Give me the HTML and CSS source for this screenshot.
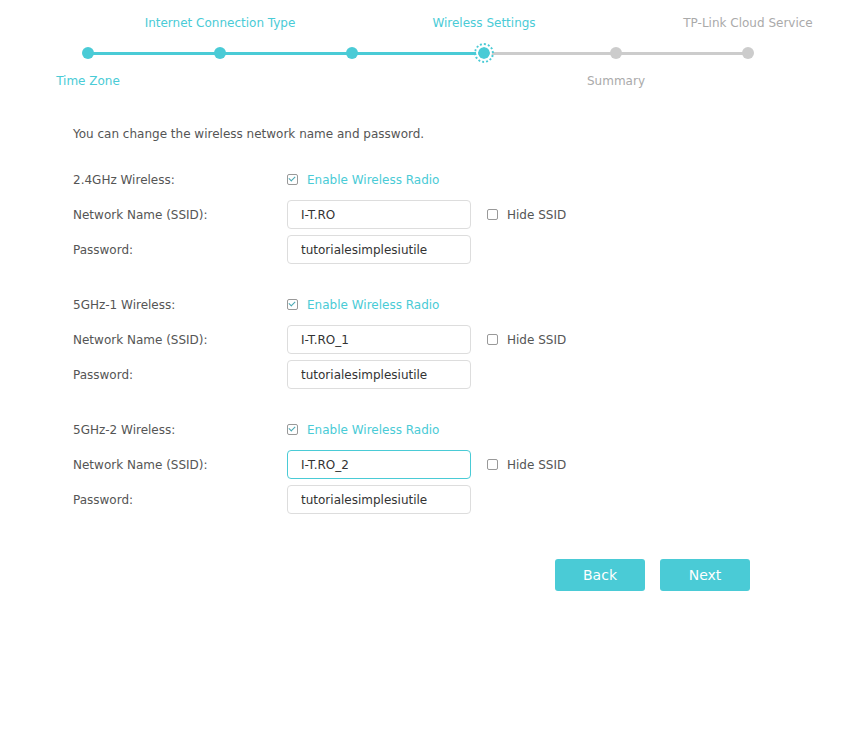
FILE: index.html
```html
<!DOCTYPE html>
<html lang="en">
<head>
    <meta charset="UTF-8">
    <title>Quick Setup - Wireless Settings</title>
    <link rel="stylesheet" href="styles.css">
</head>
<body>
    <div class="stepper">
        <div class="step done">
            <div class="step-top"></div>
            <div class="step-dot"><span class="dot"></span></div>
            <div class="step-bottom">Time Zone</div>
        </div>
        <div class="step done">
            <div class="step-top">Internet Connection Type</div>
            <div class="step-dot"><span class="dot"></span></div>
            <div class="step-bottom"></div>
        </div>
        <div class="step done">
            <div class="step-top"></div>
            <div class="step-dot"><span class="dot"></span></div>
            <div class="step-bottom"></div>
        </div>
        <div class="step current">
            <div class="step-top">Wireless Settings</div>
            <div class="step-dot"><span class="dot"></span></div>
            <div class="step-bottom"></div>
        </div>
        <div class="step">
            <div class="step-top"></div>
            <div class="step-dot"><span class="dot"></span></div>
            <div class="step-bottom">Summary</div>
        </div>
        <div class="step last">
            <div class="step-top">TP-Link Cloud Service</div>
            <div class="step-dot"><span class="dot"></span></div>
            <div class="step-bottom"></div>
        </div>
    </div>

    <div class="content">
        <p class="intro">You can change the wireless network name and password.</p>

        <div class="group">
            <div class="row">
                <div class="label">2.4GHz Wireless:</div>
                <label class="check checked"><span class="box"></span>Enable Wireless Radio</label>
            </div>
            <div class="row">
                <div class="label">Network Name (SSID):</div>
                <input class="text" type="text" value="I-T.RO">
                <label class="check hide"><span class="box"></span>Hide SSID</label>
            </div>
            <div class="row">
                <div class="label">Password:</div>
                <input class="text" type="text" value="tutorialesimplesiutile">
            </div>
        </div>

        <div class="group">
            <div class="row">
                <div class="label">5GHz-1 Wireless:</div>
                <label class="check checked"><span class="box"></span>Enable Wireless Radio</label>
            </div>
            <div class="row">
                <div class="label">Network Name (SSID):</div>
                <input class="text" type="text" value="I-T.RO_1">
                <label class="check hide"><span class="box"></span>Hide SSID</label>
            </div>
            <div class="row">
                <div class="label">Password:</div>
                <input class="text" type="text" value="tutorialesimplesiutile">
            </div>
        </div>

        <div class="group">
            <div class="row">
                <div class="label">5GHz-2 Wireless:</div>
                <label class="check checked"><span class="box"></span>Enable Wireless Radio</label>
            </div>
            <div class="row">
                <div class="label">Network Name (SSID):</div>
                <input class="text focused" type="text" value="I-T.RO_2">
                <label class="check hide"><span class="box"></span>Hide SSID</label>
            </div>
            <div class="row">
                <div class="label">Password:</div>
                <input class="text" type="text" value="tutorialesimplesiutile">
            </div>
        </div>

        <div class="actions">
            <button class="btn">Back</button>
            <button class="btn">Next</button>
        </div>
    </div>
</body>
</html>
```

FILE: styles.css
```css
body {
    margin: 0;
    font-family: 'DejaVu Sans', Verdana, sans-serif;
    font-size: 12px;
    color: #555;
    background: #fff;
}
.stepper {
    display: flex;
    padding-left: 22px;
}
.step {
    width: 132px;
    display: flex;
    flex-direction: column;
    align-items: center;
}
.step-top,
.step-bottom {
    height: 18px;
    line-height: 18px;
    white-space: nowrap;
    color: #aaa;
}
.step-top {
    margin-top: 14px;
}
.step-bottom {
    margin-top: 9px;
}
.step.done .step-top,
.step.done .step-bottom,
.step.current .step-top {
    color: #4acbd6;
}
.step-dot {
    position: relative;
    width: 100%;
    height: 20px;
    margin-top: 11px;
    display: flex;
    align-items: center;
    justify-content: center;
}
.step-dot::after {
    content: "";
    position: absolute;
    left: 50%;
    width: 100%;
    top: 9px;
    height: 3px;
    background: #ccc;
}
.step.done .step-dot::after {
    background: #4acbd6;
}
.step.last .step-dot::after {
    display: none;
}
.dot {
    position: relative;
    z-index: 1;
    width: 12px;
    height: 12px;
    border-radius: 50%;
    background: #ccc;
}
.step.done .dot {
    background: #4acbd6;
}
.step.current .dot {
    padding: 2px;
    border: 2px dotted #4acbd6;
    box-sizing: content-box;
    background-color: #4acbd6;
    background-clip: content-box;
    box-shadow: inset 0 0 0 2px #fff;
}
.content {
    padding-left: 73px;
    width: 677px;
}
.intro {
    margin: 34px 0 18px;
    line-height: 20px;
}
.group {
    margin-bottom: 20px;
}
.row {
    display: flex;
    align-items: center;
    height: 35px;
}
.label {
    width: 214px;
}
.text {
    width: 184px;
    height: 29px;
    box-sizing: border-box;
    border: 1px solid #ddd;
    border-radius: 4px;
    padding: 0 13px;
    font-family: 'DejaVu Sans', Verdana, sans-serif;
    font-size: 12px;
    color: #333;
    outline: none;
}
.text.focused {
    border-color: #4acbd6;
}
.check {
    display: flex;
    align-items: center;
    color: #4acbd6;
}
.check.hide {
    margin-left: 16px;
    color: #555;
}
.box {
    width: 9px;
    height: 9px;
    border: 1px solid #999;
    border-radius: 2px;
    margin-right: 9px;
    position: relative;
}
.check.checked .box::after {
    content: "";
    position: absolute;
    left: 2px;
    top: 0;
    width: 3px;
    height: 5px;
    border: solid #4aa8b4;
    border-width: 0 1.5px 1.5px 0;
    transform: rotate(45deg);
}
.actions {
    display: flex;
    justify-content: flex-end;
    gap: 15px;
    margin-top: 42px;
}
.btn {
    width: 90px;
    height: 32px;
    border: none;
    border-radius: 3px;
    background: #4acbd6;
    color: #fff;
    font-family: 'DejaVu Sans', Verdana, sans-serif;
    font-size: 14px;
    cursor: pointer;
}
```
